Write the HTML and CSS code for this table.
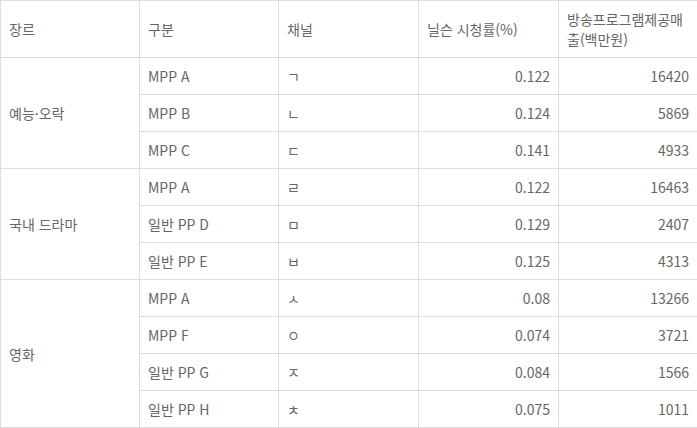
FILE: index.html
```html
<!DOCTYPE html>
<html lang="ko">
<head>
<meta charset="utf-8">
<link rel="stylesheet" href="styles.css">
</head>
<body>
<table class="data">
  <colgroup>
    <col class="c1"><col class="c2"><col class="c3"><col class="c4"><col class="c5">
  </colgroup>
  <thead>
    <tr>
      <th>장르</th>
      <th>구분</th>
      <th>채널</th>
      <th class="num">닐슨 시청률(%)</th>
      <th class="num">방송프로그램제공매출(백만원)</th>
    </tr>
  </thead>
  <tbody>
    <tr><td rowspan="3">예능·오락</td><td>MPP A</td><td>ㄱ</td><td class="num">0.122</td><td class="num">16420</td></tr>
    <tr><td>MPP B</td><td>ㄴ</td><td class="num">0.124</td><td class="num">5869</td></tr>
    <tr><td>MPP C</td><td>ㄷ</td><td class="num">0.141</td><td class="num">4933</td></tr>
    <tr><td rowspan="3">국내 드라마</td><td>MPP A</td><td>ㄹ</td><td class="num">0.122</td><td class="num">16463</td></tr>
    <tr><td>일반 PP D</td><td>ㅁ</td><td class="num">0.129</td><td class="num">2407</td></tr>
    <tr><td>일반 PP E</td><td>ㅂ</td><td class="num">0.125</td><td class="num">4313</td></tr>
    <tr><td rowspan="4">영화</td><td>MPP A</td><td>ㅅ</td><td class="num">0.08</td><td class="num">13266</td></tr>
    <tr><td>MPP F</td><td>ㅇ</td><td class="num">0.074</td><td class="num">3721</td></tr>
    <tr><td>일반 PP G</td><td>ㅈ</td><td class="num">0.084</td><td class="num">1566</td></tr>
    <tr><td>일반 PP H</td><td>ㅊ</td><td class="num">0.075</td><td class="num">1011</td></tr>
  </tbody>
</table>
</body>
</html>
```
FILE: styles.css
```css
html, body {
  margin: 0;
  padding: 0;
  background: #fff;
}
.data {
  width: 697px;
  border-collapse: collapse;
  table-layout: fixed;
  font-family: "Noto Sans CJK KR", "Noto Sans", sans-serif;
  font-size: 14px;
  line-height: 20px;
  color: #666;
}
.c1, .c2 { width: 139px; }
.c3, .c4 { width: 140px; }
.c5 { width: 139px; }
.data th, .data td {
  border: 1px solid #ddd;
  padding: 8px;
  text-align: left;
  vertical-align: middle;
  font-weight: normal;
  height: 20px;
}
.data th {
  height: 40px;
}
.data td.num {
  text-align: right;
}
```
